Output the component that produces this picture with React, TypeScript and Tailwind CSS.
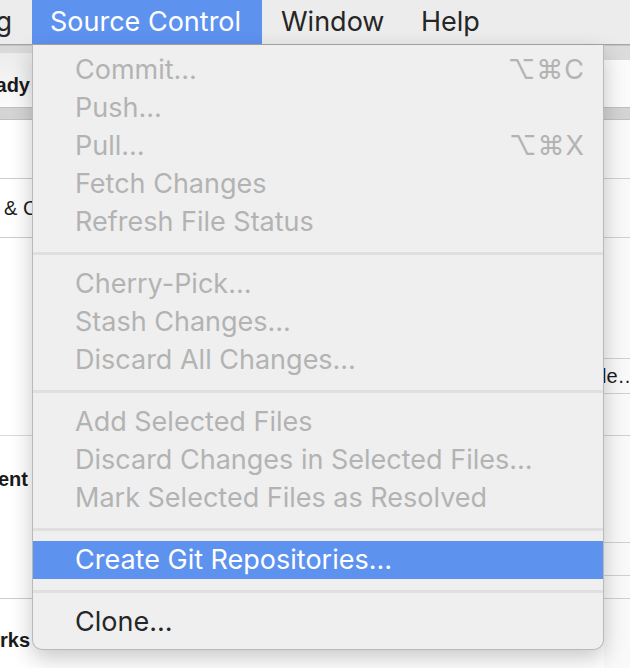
import React from "react";

type Item = { label: string; shortcut?: string; kind?: "disabled" | "active" | "normal" } | "sep";

const items: Item[] = [
  { label: "Commit…", shortcut: "⌥⌘C" },
  { label: "Push…" },
  { label: "Pull…", shortcut: "⌥⌘X" },
  { label: "Fetch Changes" },
  { label: "Refresh File Status" },
  "sep",
  { label: "Cherry-Pick…" },
  { label: "Stash Changes…" },
  { label: "Discard All Changes…" },
  "sep",
  { label: "Add Selected Files" },
  { label: "Discard Changes in Selected Files…" },
  { label: "Mark Selected Files as Resolved" },
  "sep",
  { label: "Create Git Repositories…", kind: "active" },
  "sep",
  { label: "Clone…", kind: "normal" },
];

function MenuRow({ item }: { item: Exclude<Item, "sep"> }) {
  const kind = item.kind ?? "disabled";
  const cls =
    kind === "active"
      ? "bg-[#5e92ef] text-white"
      : kind === "normal"
      ? "text-[#262626]"
      : "text-[#b3b3b3]";
  return (
    <div className={`h-[38px] flex items-center justify-between pl-[42px] pr-[18px] ${cls}`}>
      <span>{item.label}</span>
      {item.shortcut && <span className="tracking-[1px]">{item.shortcut}</span>}
    </div>
  );
}

export default function App() {
  return (
    <div className="relative w-[630px] h-[668px] overflow-hidden bg-[#fafafa] font-['Inter','DejaVu_Sans',sans-serif]">
      {/* menu bar */}
      <div className="h-[45px] border-b border-[#a6a6a6] bg-[#ececec] flex items-stretch text-[27px] text-[#262626]">
        <div className="w-[32px] overflow-hidden flex justify-end items-center pr-[20px]">
          <span>Debug</span>
        </div>
        <div className="bg-[#5e92ef] text-white w-[230px] pl-[18px] flex items-center">Source Control</div>
        <div className="pl-[19px] w-[159px] flex items-center">Window</div>
        <div className="flex items-center">Help</div>
      </div>

      {/* background window */}
      <div className="flex h-[623px] text-[20px] text-[#1a1a1a] font-['Liberation_Sans',sans-serif]">
        <div className="w-[32px] flex flex-col overflow-hidden">
          <div className="h-[8px] bg-[#d9d9d9] border-t border-[#c4c4c4]" />
          <div className="h-[54px] bg-gradient-to-b from-[#ececec] to-[#fbfbfb] flex items-center justify-end pt-[10px] pr-[2px] font-bold">
            <span>ady</span>
          </div>
          <div className="h-[13px] bg-[#d4d4d4] border-y border-[#c0c0c0]" />
          <div className="h-[59px] border-b border-[#cdcdcd] bg-white" />
          <div className="h-[59px] border-b border-[#cdcdcd] bg-white flex items-center pl-[4px] whitespace-nowrap">
            <span>&amp; C</span>
          </div>
          <div className="h-[198px] border-b border-[#dadada] bg-white" />
          <div className="h-[163px] border-b border-[#cdcdcd] bg-white flex justify-end pt-[28px] pr-[4px] font-bold">
            <span>ent</span>
          </div>
          <div className="flex-1 bg-white flex justify-end pt-[26px] pr-[2px] font-bold">
            <span>rks</span>
          </div>
        </div>
        <div className="flex-1 bg-white" />
        <div className="w-[26px] flex flex-col overflow-hidden bg-[#f9f9f9]">
          <div className="h-[15px] bg-[#dcdcdc] border-t border-[#c4c4c4]" />
          <div className="h-[47px] bg-[#fbfbfb]" />
          <div className="h-[13px] bg-[#d4d4d4] border-y border-[#c0c0c0]" />
          <div className="h-[59px] border-b border-[#d0d0d0]" />
          <div className="h-[59px] border-b border-[#d0d0d0]" />
          <div className="h-[121px] border-b border-[#d0d0d0]" />
          <div className="h-[35px] border-b border-[#d0d0d0] flex items-center whitespace-nowrap">
            <span className="-ml-[2px]">le…</span>
          </div>
          <div className="h-[42px] border-b border-[#d0d0d0]" />
          <div className="h-[107px] border-b border-[#d0d0d0]" />
          <div className="h-[33px] border-b border-[#d0d0d0]" />
          <div className="h-[23px] border-b border-[#d0d0d0]" />
          <div className="flex-1" />
        </div>
      </div>

      {/* dropdown menu */}
      <div className="absolute left-[32px] top-[45px] w-[572px] bg-[#efefef] border-x border-b border-[#b9b9b9] rounded-b-[10px] pt-[6px] pb-[8px] text-[27px] shadow-[0_8px_22px_rgba(0,0,0,0.22)]">
        {items.map((it, i) =>
          it === "sep" ? (
            <div key={i} className="h-[24px] pt-[11px]">
              <div className="h-[3px] bg-[#dfdfdf]" />
            </div>
          ) : (
            <MenuRow key={i} item={it} />
          )
        )}
      </div>
    </div>
  );
}
